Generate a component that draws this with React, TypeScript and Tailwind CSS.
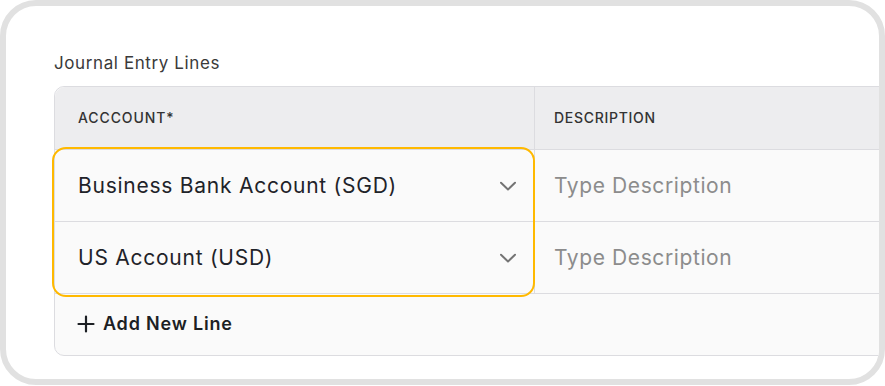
import React from 'react';

type Line = {
  account: string;
};

const lines: Line[] = [
  { account: 'Business Bank Account (SGD)' },
  { account: 'US Account (USD)' },
];

const Chevron: React.FC = () => (
  <svg width="20" height="20" viewBox="0 0 20 20" fill="none" className="shrink-0">
    <path d="M3 6.8L10 13.4L17 6.8" stroke="#747474" strokeWidth="2" strokeLinecap="round" strokeLinejoin="round" />
  </svg>
);

const Plus: React.FC = () => (
  <svg width="18" height="18" viewBox="0 0 18 18" fill="none" className="shrink-0">
    <path d="M9 1.5V16.5M1.5 9H16.5" stroke="#1c1f24" strokeWidth="2.2" strokeLinecap="round" />
  </svg>
);

const App: React.FC = () => {
  return (
    <div className="w-[885px] h-[386px] bg-white font-['Inter',sans-serif]">
      <div className="w-[885px] h-[385px] border-[6px] border-[#e1e1e1] rounded-[36px] overflow-hidden bg-white pl-[48px] pt-[46px]">
        <div className="text-[17px] leading-[22px] text-[#3a3a3a] tracking-[0.6px]">Journal Entry Lines</div>

        <div className="relative mt-[12px] w-[900px] border border-[#dcdce0] rounded-[10px] bg-[#fafafa]">
          {/* header */}
          <div className="flex h-[63px] bg-[#ededef] rounded-t-[10px] border-b border-[#dcdce0]">
            <div className="w-[480px] flex items-center pb-[2px] pl-[23px] border-r border-[#dcdce0] text-[14px] font-medium text-[#333] tracking-[0.9px]">
              ACCCOUNT*
            </div>
            <div className="flex-1 flex items-center pb-[2px] pl-[19px] text-[14px] font-medium text-[#333] tracking-[0.7px]">
              DESCRIPTION
            </div>
          </div>

          {/* lines */}
          {lines.map((line) => (
            <div key={line.account} className="flex h-[72px] border-b border-[#dcdce0]">
              <div className="w-[480px] flex items-center justify-between pl-[23px] pr-[16px] border-r border-[#dcdce0]">
                <span className="text-[21px] tracking-[0.75px] text-[#1f2329]">{line.account}</span>
                <Chevron />
              </div>
              <div className="flex-1 flex items-center pl-[19px]">
                <span className="text-[21px] tracking-[0.6px] text-[#8c8c8c]">Type Description</span>
              </div>
            </div>
          ))}

          {/* add row */}
          <div className="flex items-center h-[61px] pb-[2px] pl-[22px] gap-[8px]">
            <Plus />
            <span className="text-[18px] font-semibold tracking-[0.8px] text-[#1c1f24]">Add New Line</span>
          </div>

          {/* focus ring around account column */}
          <div className="absolute left-[-3px] top-[60px] w-[483px] h-[150px] border-[2.5px] border-[#ffb900] rounded-[14px] pointer-events-none" />
        </div>
      </div>
    </div>
  );
};

export default App;
